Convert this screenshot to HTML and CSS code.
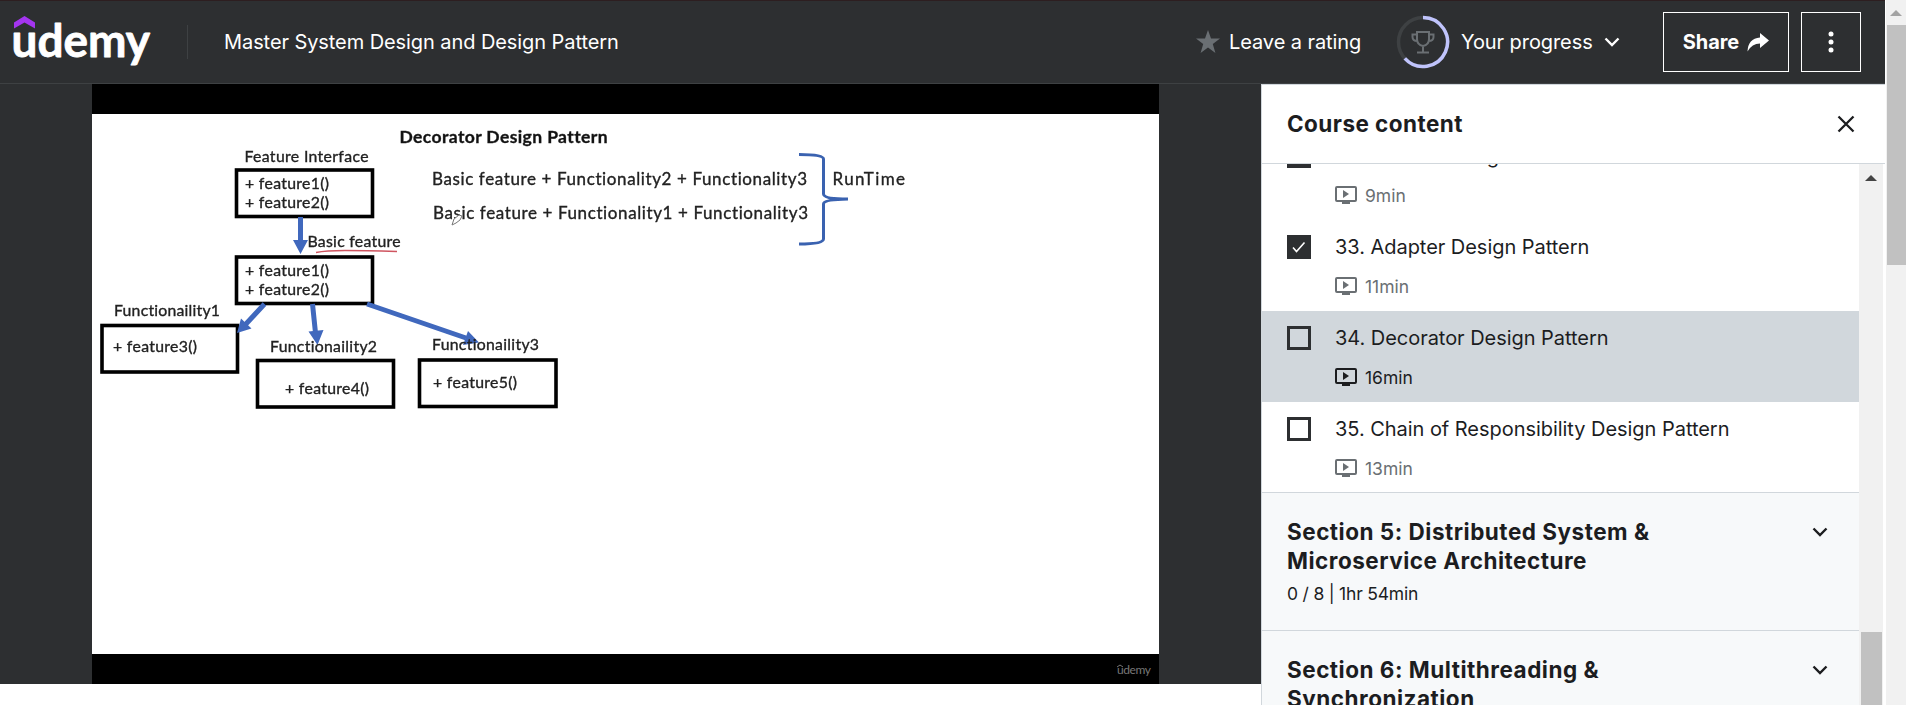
FILE: index.html
```html
<!DOCTYPE html>
<html lang="en">
<head>
<meta charset="utf-8">
<title>Master System Design and Design Pattern</title>
<link rel="stylesheet" href="styles.css">
</head>
<body>
<svg class="defs" width="0" height="0">
  <symbol id="i-video" viewBox="0 0 22 18"><path fill-rule="evenodd" d="M2 0H20Q22 0 22 2V14Q22 16 20 16H15V18H7V16H2Q0 16 0 14V2Q0 0 2 0ZM2 2V14H20V2ZM8 4L14 8L8 12Z" fill="currentColor"/></symbol>
  <symbol id="i-chevron" viewBox="0 0 16 10"><path d="M1.500 1.500L8 8L14.500 1.500" fill="none" stroke="currentColor" stroke-width="2.400"/></symbol>
</svg>
<div class="app">
  <div class="page">
    <header class="header">
      <svg class="logo" width="140" height="60" viewBox="0 0 140 60">
        <path d="M1 10.500L11.500 4L22 10.500V16.500L11.500 10.500L1 16.500Z" fill="#a435f0"/>
        <text x="-1.500" y="44.500" textLength="138.500" lengthAdjust="spacingAndGlyphs" class="logo-text">udemy</text>
      </svg>
      <span class="divider"></span>
      <h1 class="course">Master System Design and Design Pattern</h1>
      <div class="rating">
        <svg width="24" height="24" viewBox="0 0 24 24"><path d="M12 0L15 8.600H24L16.800 14L19.400 23L12 17.600L4.600 23L7.200 14L0 8.600H9Z" fill="#6a6f73"/></svg>
        <span>Leave a rating</span>
      </div>
      <div class="progress">
        <svg width="54" height="54" viewBox="0 0 54 54" fill="none">
          <circle cx="27" cy="27" r="24.500" stroke="#3e4143" stroke-width="3.500"/>
          <path d="M27 2.500A24.500 24.500 0 1 1 8.800 43.400" stroke="#c0c4fc" stroke-width="3.500"/>
          <g stroke="#6a6f73" stroke-width="2"><path d="M21 17H33V24Q33 30 27 31Q21 30 21 24ZM21 19.500H16.500V22Q16.500 26 21.500 26M33 19.500H37.500V22Q37.500 26 32.500 26M27 31V37M21 37.500H33"/></g>
        </svg>
        <span>Your progress</span>
        <svg class="chev" width="16" height="10"><use href="#i-chevron"/></svg>
      </div>
      <div class="btn share"><span>Share</span>
        <svg width="22" height="19" viewBox="0 0 22 19"><path d="M13 0L22 7.500L13 15V10.500Q5 10.500 0.500 18.500Q1 5.500 13 4.500Z" fill="#fff"/></svg>
      </div>
      <div class="btn more">
        <svg width="6" height="22" viewBox="0 0 6 22" fill="#fff"><circle cx="3" cy="3" r="2.500"/><circle cx="3" cy="11" r="2.500"/><circle cx="3" cy="19" r="2.500"/></svg>
      </div>
    </header>
    <main class="main">
      <section class="stage">
        <div class="player">
          <svg width="1067" height="600" viewBox="92 84 1067 600">
            <rect x="92" y="84" width="1067" height="600" fill="#000"/>
            <rect x="92" y="114" width="1067" height="540" fill="#fff"/>
            <g class="slide">
              <g class="box">
                <rect x="236.500" y="170" width="136" height="46.500"/>
                <rect x="236.500" y="257" width="136" height="46.500"/>
                <rect x="102" y="325.500" width="135.500" height="46.500"/>
                <rect x="257.500" y="360.500" width="136" height="46.500"/>
                <rect x="419.500" y="360" width="136.500" height="46.500"/>
              </g>
              <g class="arrows">
                <path d="M300.500 217V242M264.500 304L245 325M312.500 304L315.500 333M367 304L466 338"/>
                <path class="head" d="M293 240H308L300.500 254ZM237 333L241 318.500L251.500 328.500ZM308.500 331.500L323.500 330L317.500 345ZM463 345L468 331L479 342.500Z"/>
              </g>
              <g class="txt">
                <text class="t" x="399.500" y="142.500" textLength="208">Decorator Design Pattern</text>
                <text x="244.500" y="162" textLength="124">Feature Interface</text>
                <text x="245" y="188.500" textLength="84">+ feature1()</text>
                <text x="245" y="208" textLength="84">+ feature2()</text>
                <text x="307.500" y="246.500" textLength="93">Basic feature</text>
                <text x="245" y="275.500" textLength="84">+ feature1()</text>
                <text x="245" y="295" textLength="84">+ feature2()</text>
                <text x="114" y="316" textLength="106">Functionaility1</text>
                <text x="113" y="352" textLength="84">+ feature3()</text>
                <text x="270" y="351.500" textLength="107">Functionaility2</text>
                <text x="285" y="394" textLength="84">+ feature4()</text>
                <text x="432" y="350" textLength="107">Functionaility3</text>
                <text x="433" y="387.500" textLength="84">+ feature5()</text>
                <text class="l" x="432" y="185" textLength="375">Basic feature + Functionality2 + Functionality3</text>
                <text class="l" x="433" y="219" textLength="375">Basic feature + Functionality1 + Functionality3</text>
                <text class="l" x="832.500" y="185" textLength="72.500">RunTime</text>
              </g>
              <path d="M316 252.500Q326 250.500 345 250.500T397 251.500" fill="none" stroke="#cf5560" stroke-width="1.500"/>
              <path d="M799 154.500Q823.500 154.500 823.500 159V194Q823.500 199 848 199Q823.500 199.500 823.500 204V239Q823.500 244 799 244" fill="none" stroke="#3a62b0" stroke-width="3"/>
              <path d="M452 225L454 219L459 215L462 216L460 220L456 223Z" fill="#fff" stroke="#777" stroke-width="1"/>
            </g>
            <g class="mark"><text x="1117" y="674" textLength="34">udemy</text><path d="M1117 667L1120 665L1123 667" fill="none" stroke="#777"/></g>
          </svg>
        </div>
      </section>
      <aside class="sidebar">
        <div class="side-head"><h2>Course content</h2>
          <svg width="18" height="18" viewBox="0 0 18 18"><path d="M1.500 1.500L16.500 16.500M16.500 1.500L1.500 16.500" stroke="#1c1d1f" stroke-width="2.300"/></svg>
        </div>
        <div class="side-body">
          <div class="list">
            <div class="item first"><span class="check on"></span>
              <div><div class="name">32. Facade Design Pattern</div><div class="meta"><svg width="22" height="18"><use href="#i-video"/></svg>9min</div></div></div>
            <div class="item"><span class="check on"><svg width="14" height="12" viewBox="0 0 14 12"><path d="M1 6.500L4.500 10.500L12.500 1.500" fill="none" stroke="#fff" stroke-width="1.600"/></svg></span>
              <div><div class="name">33. Adapter Design Pattern</div><div class="meta"><svg width="22" height="18"><use href="#i-video"/></svg>11min</div></div></div>
            <div class="item current"><span class="check"></span>
              <div><div class="name">34. Decorator Design Pattern</div><div class="meta"><svg width="22" height="18"><use href="#i-video"/></svg>16min</div></div></div>
            <div class="item last"><span class="check"></span>
              <div><div class="name">35. Chain of Responsibility Design Pattern</div><div class="meta"><svg width="22" height="18"><use href="#i-video"/></svg>13min</div></div></div>
            <div class="section"><div><h3>Section 5: Distributed System &amp;<br>Microservice Architecture</h3><p>0 / 8 | 1hr 54min</p></div>
              <svg class="chev" width="16" height="10"><use href="#i-chevron"/></svg></div>
            <div class="section"><div><h3>Section 6: Multithreading &amp;<br>Synchronization</h3></div>
              <svg class="chev" width="16" height="10"><use href="#i-chevron"/></svg></div>
          </div>
          <div class="bar inner"><span class="up"></span><span class="thumb"></span></div>
        </div>
      </aside>
    </main>
  </div>
  <div class="bar outer"><span class="up"></span><span class="thumb"></span></div>
</div>
</body>
</html>
```
FILE: styles.css
```css
* { box-sizing: border-box; }
body { margin: 0; overflow: hidden; background: #fff; font-family: Inter, "Liberation Sans", sans-serif; color: #1c1d1f; }
h1, h2, h3, p { margin: 0; }
svg { display: block; flex: none; }
.defs { position: absolute; }
.app { display: flex; width: 1906px; height: 705px; overflow: hidden; }
.page { width: 1885px; display: flex; flex-direction: column; }

.header { height: 84px; flex: none; display: flex; align-items: center; background: #2d2f31; border-top: 1px solid #2d1e20; border-bottom: 1px solid #3e4143; color: #fff; font-size: 20px; letter-spacing: -0.08px; padding: 0 24px 0 13px; white-space: nowrap; }
.logo { overflow: visible; }
.logo-text { font-family: Lato, sans-serif; font-weight: 700; font-size: 46px; letter-spacing: 0; fill: #fff; stroke: #fff; stroke-width: 0.8; stroke-linejoin: round; }
.divider { width: 1px; height: 34px; margin-left: 34px; background: #3e4143; }
.course { margin-left: 36px; font-size: 20px; font-weight: 400; }
.rating { display: flex; align-items: center; gap: 9px; margin-left: auto; width: 166px; }
.progress { display: flex; align-items: center; width: 224px; margin-left: 34px; }
.progress span { margin-left: 11px; width: 143px; }
.btn { height: 60px; border: 1px solid #fff; display: flex; align-items: center; justify-content: center; }
.share { width: 126px; gap: 8px; margin-left: 43px; font-weight: 700; }
.more { width: 60px; margin-left: 12px; }

.main { flex: 1; min-height: 0; display: flex; }
.stage { width: 1261px; height: 600px; background: #2d2f31; padding-left: 92px; }
.slide { filter: blur(0.5px); }
.box rect { fill: #fff; stroke: #000; stroke-width: 3.6; }
.arrows path { fill: none; stroke: #4068bd; stroke-width: 5; }
.arrows .head { fill: #4068bd; stroke: none; }
.txt text { font-family: Lato, sans-serif; font-size: 15.8px; fill: #222; stroke: #222; stroke-width: 0.35; font-variant-ligatures: none; }
.txt .l { font-size: 17px; }
.txt .t { font-size: 17.5px; font-weight: 700; fill: #111; }
.mark text { font-family: Lato, sans-serif; font-size: 12px; fill: #777; }

.sidebar { width: 624px; background: #fff; border: 1px solid #d1d7dc; border-width: 1px 0 0 1px; display: flex; flex-direction: column; }
.side-head { height: 79px; flex: none; display: flex; align-items: center; justify-content: space-between; padding: 0 30px 0 25px; border-bottom: 1px solid #d1d7dc; }
.side-head h2 { font-size: 22.5px; line-height: 28px; font-weight: 700; letter-spacing: 0.45px; }
.side-body { flex: 1; min-height: 0; display: flex; overflow: hidden; }
.list { width: 597px; height: 541px; overflow: hidden; }
.item { height: 91px; display: flex; gap: 24px; padding: 15px 0 0 25px; }
.item.first { margin-top: -35px; }
.item.last { height: 90px; }
.item.current { background: #d1d7dc; }
.check { width: 24px; height: 24px; flex: none; border: 3px solid #2d2f31; display: flex; align-items: center; justify-content: center; }
.check.on { background: #2d2f31; }
.name { font-size: 20px; line-height: 24px; letter-spacing: -0.04px; white-space: nowrap; }
.meta { display: flex; align-items: center; gap: 8px; margin-top: 16px; height: 22px; font-size: 17.5px; color: #6a6f73; }
.current .meta { color: #1c1d1f; }
.section { height: 138px; background: #f7f9fa; border-top: 1px solid #d1d7dc; padding: 24px 31px 0 25px; display: flex; justify-content: space-between; }
.section h3 { font-size: 22.5px; line-height: 29px; font-weight: 700; letter-spacing: 0.5px; white-space: nowrap; }
.section p { font-size: 17.5px; line-height: 24px; margin-top: 7px; letter-spacing: -0.2px; }
.section .chev { margin-top: 10px; }

.bar { background: #f1f1f1; display: flex; flex-direction: column; align-items: center; }
.up { border: 6px solid transparent; border-top: 0; border-bottom: 6px solid #444; flex: none; }
.thumb { background: #c1c1c1; flex: none; }
.inner { width: 24px; padding-top: 11px; }
.inner .thumb { width: 21px; height: 80px; margin-top: 451px; }
.outer { width: 20px; margin-left: 1px; padding-top: 10px; }
.outer .up { border-bottom-color: #a3a3a3; }
.outer .thumb { width: 19px; height: 240px; margin-top: 9px; }
```
